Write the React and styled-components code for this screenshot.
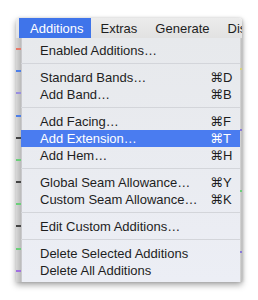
import React from "react";
import styled, { createGlobalStyle } from "styled-components";

const GlobalStyle = createGlobalStyle`
  body {
    margin: 0;
    background: #fff;
    font-family: "Liberation Sans", "DejaVu Sans", sans-serif;
  }
`;

const menuTitles = ["Additions", "Extras", "Generate", "Display"];

const items = [
  { label: "Enabled Additions…" },
  { sep: true },
  { label: "Standard Bands…", key: "⌘D" },
  { label: "Add Band…", key: "⌘B" },
  { sep: true },
  { label: "Add Facing…", key: "⌘F" },
  { label: "Add Extension…", key: "⌘T", active: true },
  { label: "Add Hem…", key: "⌘H" },
  { sep: true },
  { label: "Global Seam Allowance…", key: "⌘Y" },
  { label: "Custom Seam Allowance…", key: "⌘K" },
  { sep: true },
  { label: "Edit Custom Additions…" },
  { sep: true },
  { label: "Delete Selected Additions" },
  { label: "Delete All Additions" },
];

const Page = styled.div`
  padding: 18px 0 0 16px;
  height: 300px;
  box-sizing: border-box;
`;

const Window = styled.div`
  width: 226px;
  overflow: hidden;
  border-radius: 3px 3px 0 0;
  box-shadow: 0 3px 6px rgba(0, 0, 0, 0.35), 1px 0 3px rgba(0, 0, 0, 0.15);
`;

const MenuBar = styled.div`
  display: flex;
  height: 20px;
  overflow: hidden;
  background: linear-gradient(#ececec, #e2e2e2);
  padding-left: 3px;
  white-space: nowrap;
`;

const MenuTitle = styled.div`
  display: flex;
  align-items: center;
  padding: ${(p) => (p.$active ? "0 8px 0 11px" : "0 9px")};
  font-size: 13px;
  color: ${(p) => (p.$active ? "#fff" : "#1e1e1e")};
  background: ${(p) => (p.$active ? "#3f74ea" : "transparent")};
`;

const Body = styled.div`
  display: flex;
`;

const BgStrip = styled.div`
  width: ${(p) => p.$w}px;
  flex-shrink: 0;
  background: linear-gradient(90deg, #d8d8d8, #bababa);
  display: flex;
  flex-direction: column;
  justify-content: space-around;
`;

const Tick = styled.div`
  height: 2px;
  background: ${(p) => p.$c};
`;

const Dropdown = styled.div`
  flex: 1;
  min-width: 0;
  background: linear-gradient(#e7e9ec, #eceef5);
  padding: 4px 0 3px;
  box-shadow: inset 1px 0 0 #c9c9cc;
`;

const Item = styled.div`
  display: flex;
  justify-content: space-between;
  align-items: center;
  height: 17px;
  padding: 0 10px 0 19px;
  font-size: 13px;
  white-space: nowrap;
  color: ${(p) => (p.$active ? "#fff" : "#1e1e1e")};
  background: ${(p) => (p.$active ? "#4a7cf0" : "transparent")};
`;

const Shortcut = styled.span`
  width: 20px;
  text-align: left;
`;

const Separator = styled.div`
  height: 1px;
  margin: 4px 0 5px;
  background: #d3d5da;
`;

const leftTicks = ["#e77a6a", "#4d7fe8", "#9a8fe0", "#4d7fe8", "#444", "#6ccf7a", "#444", "#6ccf7a", "#444", "#6ccf7a", "#a070e0"];

export default function App() {
  return (
    <Page>
      <GlobalStyle />
      <Window>
        <MenuBar>
          {menuTitles.map((t, i) => (
            <MenuTitle key={t} $active={i === 0}>
              {t}
            </MenuTitle>
          ))}
        </MenuBar>
        <Body>
          <BgStrip $w={5}>
            {leftTicks.map((c, i) => (
              <Tick key={i} $c={c} />
            ))}
          </BgStrip>
          <Dropdown>
            {items.map((it, i) =>
              it.sep ? (
                <Separator key={i} />
              ) : (
                <Item key={i} $active={it.active}>
                  <span>{it.label}</span>
                  {it.key && <Shortcut>{it.key}</Shortcut>}
                </Item>
              )
            )}
          </Dropdown>
          <BgStrip $w={2}>
            <Tick $c="#d8d27a" />
            <Tick $c="#8a7ad8" />
            <Tick $c="#6ccf7a" />
            <Tick $c="#8a7ad8" />
          </BgStrip>
        </Body>
      </Window>
    </Page>
  );
}
